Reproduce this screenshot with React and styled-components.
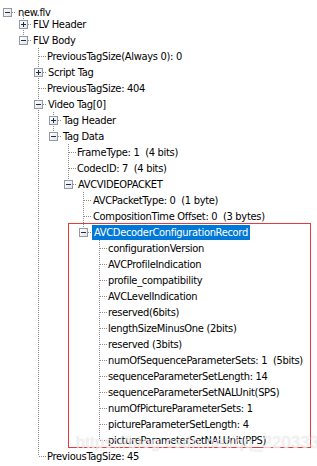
import React from "react";
import styled, { createGlobalStyle, css } from "styled-components";

const GlobalStyle = createGlobalStyle`
  html, body {
    margin: 0;
    padding: 0;
    background: #ffffff;
  }
  body {
    font-family: "DejaVu Sans Condensed", "DejaVu Sans", sans-serif;
    font-stretch: semi-condensed;
    font-size: 11px;
    letter-spacing: -0.3px;
    color: #000000;
  }
`;

// x centre of the guide column for each depth
const COLS = [7, 23, 38, 53, 68, 83, 99, 114, 129];

const DOTS_V = "repeating-linear-gradient(to bottom, #8a8a8a 0 1px, transparent 1px 2px)";
const DOTS_H = "repeating-linear-gradient(to right, #8a8a8a 0 1px, transparent 1px 2px)";

const TreeView = styled.div`
  position: relative;
  width: 317px;
  height: 466px;
  overflow: hidden;
  background: #ffffff;
`;

const Row = styled.div`
  display: flex;
  align-items: center;
  height: 16px;
  white-space: pre;
  ${(p) =>
    p.$root &&
    css`
      margin-top: 4px;
      margin-bottom: -4px;
    `}
`;

const Cell = styled.span`
  position: relative;
  flex: none;
  width: ${(p) => p.$w}px;
  height: 16px;

  &::before {
    content: "";
    display: ${(p) => (p.$up || p.$down ? "block" : "none")};
    position: absolute;
    left: 7px;
    width: 1px;
    top: ${(p) => (p.$up ? 0 : 8)}px;
    bottom: ${(p) => (p.$down ? 0 : 8)}px;
    background: ${DOTS_V};
  }

  &::after {
    content: "";
    display: ${(p) => (p.$horiz ? "block" : "none")};
    position: absolute;
    left: 8px;
    right: 0;
    top: 8px;
    height: 1px;
    background: ${DOTS_H};
  }
`;

const Toggle = styled.span`
  position: absolute;
  left: 3px;
  top: 4px;
  width: 7px;
  height: 7px;
  border: 1px solid #8f9aa6;
  background: linear-gradient(to bottom right, #ffffff, #e4e4e4);
  z-index: 1;

  &::before {
    content: "";
    position: absolute;
    left: 1px;
    top: 3px;
    width: 5px;
    height: 1px;
    background: #1f2a44;
  }

  &::after {
    content: "";
    display: ${(p) => (p.$open ? "none" : "block")};
    position: absolute;
    left: 3px;
    top: 1px;
    width: 1px;
    height: 5px;
    background: #1f2a44;
  }
`;

const Label = styled.span`
  display: inline-block;
  height: 15px;
  line-height: 15px;
  padding: 0 2px;
  margin-left: ${(p) => (p.$leaf ? -1 : 0)}px;
  background: ${(p) => (p.$selected ? "#0078d7" : "transparent")};
  color: ${(p) => (p.$selected ? "#ffffff" : "#000000")};
`;

const RedFrame = styled.div`
  position: absolute;
  left: 68px;
  top: 223px;
  width: 241px;
  height: 223px;
  border: 1px solid #e83a3a;
  pointer-events: none;
`;

const Watermark = styled.div`
  position: absolute;
  left: 76px;
  top: 434px;
  font-family: "Liberation Sans", Arial, sans-serif;
  font-stretch: normal;
  font-size: 16px;
  letter-spacing: 0.5px;
  color: rgba(255, 255, 255, 0.7);
  text-shadow: 0 0 1px rgba(160, 160, 160, 0.5);
  pointer-events: none;
  white-space: nowrap;
`;

const leaf = (label) => ({ label });

const tree = {
  label: "new.flv",
  open: true,
  children: [
    { label: "FLV Header", open: false, children: [leaf("x")] },
    {
      label: "FLV Body",
      open: true,
      children: [
        leaf("PreviousTagSize(Always 0): 0"),
        { label: "Script Tag", open: false, children: [leaf("x")] },
        leaf("PreviousTagSize: 404"),
        {
          label: "Video Tag[0]",
          open: true,
          children: [
            { label: "Tag Header", open: false, children: [leaf("x")] },
            {
              label: "Tag Data",
              open: true,
              children: [
                leaf("FrameType: 1  (4 bits)"),
                leaf("CodecID: 7  (4 bits)"),
                {
                  label: "AVCVIDEOPACKET",
                  open: true,
                  children: [
                    leaf("AVCPacketType: 0  (1 byte)"),
                    leaf("CompositionTime Offset: 0  (3 bytes)"),
                    {
                      label: "AVCDecoderConfigurationRecord",
                      open: true,
                      selected: true,
                      children: [
                        leaf("configurationVersion"),
                        leaf("AVCProfileIndication"),
                        leaf("profile_compatibility"),
                        leaf("AVCLevelIndication"),
                        leaf("reserved(6bits)"),
                        leaf("lengthSizeMinusOne (2bits)"),
                        leaf("reserved (3bits)"),
                        leaf("numOfSequenceParameterSets: 1  (5bits)"),
                        leaf("sequenceParameterSetLength: 14"),
                        leaf("sequenceParameterSetNALUnit(SPS)"),
                        leaf("numOfPictureParameterSets: 1"),
                        leaf("pictureParameterSetLength: 4"),
                        leaf("pictureParameterSetNALUnit(PPS)"),
                      ],
                    },
                  ],
                },
              ],
            },
          ],
        },
        leaf("PreviousTagSize: 45"),
      ],
    },
  ],
};

// flatten the visible part of the tree into rows with their guide lines
function flatten(node, level, guides, hasNext, out) {
  const expandable = !!node.children;
  out.push({
    label: node.label,
    level,
    guides,
    hasNext,
    expandable,
    open: !!node.open,
    selected: !!node.selected,
  });
  if (expandable && node.open) {
    node.children.forEach((child, i) => {
      flatten(child, level + 1, [...guides, hasNext], i < node.children.length - 1, out);
    });
  }
  return out;
}

const rows = flatten(tree, 0, [], false, []);

const TreeRow = ({ row }) => {
  const { level, guides } = row;
  return (
    <Row $root={level === 0}>
      {guides.map((on, k) => (
        <Cell key={k} $w={COLS[k + 1] - COLS[k]} $up={on && k > 0} $down={on && k > 0} />
      ))}
      <Cell $w={COLS[level + 1] - COLS[level]} $up={level > 0} $down={row.hasNext} $horiz>
        {row.expandable && <Toggle $open={row.open} />}
      </Cell>
      <Label $leaf={!row.expandable} $selected={row.selected}>
        {row.label}
      </Label>
    </Row>
  );
};

const App = () => {
  return (
    <>
      <GlobalStyle />
      <TreeView>
        {rows.map((row, i) => (
          <TreeRow key={i} row={row} />
        ))}
        <RedFrame />
        <Watermark>https://blog.csdn.net/qq_22033333</Watermark>
      </TreeView>
    </>
  );
};

export default App;
